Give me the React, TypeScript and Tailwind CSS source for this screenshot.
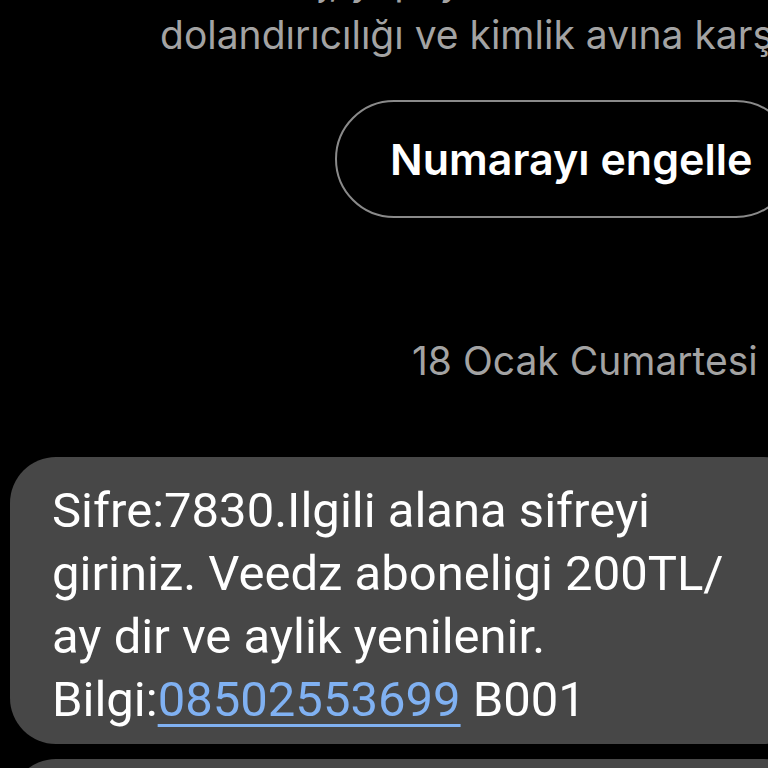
import React from "react";

export default function App() {
  return (
    <div className="w-[768px] h-[768px] bg-black overflow-hidden flex flex-col">
      <div
        className="mt-[-44px] pl-[160px] text-[#a3a3a3] text-[39px] whitespace-nowrap"
        style={{ fontFamily: "Inter, 'Noto Sans', sans-serif" }}
      >
        <div className="leading-[50px]">Bu mesaj, yapay zeka ile SMS</div>
        <div className="leading-[58px]">dolandırıcılığı ve kimlik avına karşı</div>
      </div>

      <div className="pl-[335px] mt-[36px]">
        <div className="w-[460px] h-[118px] rounded-full border-2 border-[#8a8a8a] flex items-center pl-[53px]">
          <span
            className="text-white text-[43px] font-semibold whitespace-nowrap"
            style={{ fontFamily: "Inter, 'Noto Sans', sans-serif" }}
          >
            Numarayı engelle
          </span>
        </div>
      </div>

      <div
        className="pl-[412px] mt-[121px] text-[#a3a3a3] text-[39px] leading-[44px] whitespace-nowrap"
        style={{ fontFamily: "Inter, 'Noto Sans', sans-serif" }}
      >
        18 Ocak Cumartesi
      </div>

      <div className="ml-[10px] mt-[74px] w-[800px] shrink-0 rounded-[46px] bg-[#474747] pl-[42px] pt-[22px] pb-[13px]">
        <div
          className="text-white text-[49px] leading-[63px]"
          style={{ fontFamily: "Roboto, 'Noto Sans', sans-serif" }}
        >
          <div>Sifre:7830.Ilgili alana sifreyi</div>
          <div>giriniz. Veedz aboneligi 200TL/</div>
          <div>ay dir ve aylik yenilenir.</div>
          <div>
            Bilgi:
            <span className="text-[#80b1f2] underline decoration-[3px] underline-offset-[8px]">
              08502553699
            </span>{" "}
            B001
          </div>
        </div>
      </div>

      <div className="ml-[10px] mt-[15px] w-[800px] h-[100px] shrink-0 rounded-[46px] bg-[#474747]" />
    </div>
  );
}
